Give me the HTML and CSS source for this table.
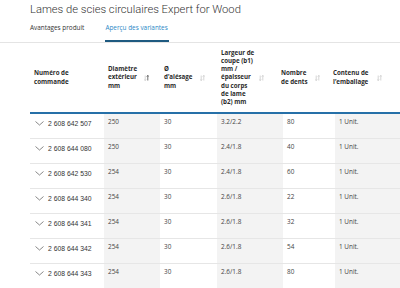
FILE: index.html
```html
<!DOCTYPE html>
<html lang="fr">
<head>
<meta charset="utf-8">
<title>Lames de scies circulaires Expert for Wood</title>
<link rel="stylesheet" href="styles.css">
</head>
<body>
<header class="top">
  <h1 class="title">Lames de scies circulaires Expert for Wood</h1>
  <nav class="tabs">
    <a class="tab">Avantages produit</a>
    <a class="tab active">Aperçu des variantes</a>
  </nav>
</header>
<div class="table">
  <div class="thead">
    <div class="th"><span class="lbl">Numéro de commande</span></div>
    <div class="th"><span class="lbl">Diamètre extérieur mm</span><svg class="sort asc" viewBox="0 0 5 8" width="5" height="8"><path class="dn" d="M1.2 1.5v5M0.2 5.4l1 1.2 1-1.2"/><path class="up" d="M3.8 6.5v-5M2.8 2.6l1-1.2 1 1.2"/></svg></div>
    <div class="th"><span class="lbl">Ø d’alésage mm</span><svg class="sort" viewBox="0 0 5 8" width="5" height="8"><path class="dn" d="M1.2 1.5v5M0.2 5.4l1 1.2 1-1.2"/><path class="up" d="M3.8 6.5v-5M2.8 2.6l1-1.2 1 1.2"/></svg></div>
    <div class="th"><span class="lbl">Largeur de coupe (b1) mm / épaisseur du corps de lame (b2) mm</span><svg class="sort" viewBox="0 0 5 8" width="5" height="8"><path class="dn" d="M1.2 1.5v5M0.2 5.4l1 1.2 1-1.2"/><path class="up" d="M3.8 6.5v-5M2.8 2.6l1-1.2 1 1.2"/></svg></div>
    <div class="th"><span class="lbl">Nombre de dents</span><svg class="sort" viewBox="0 0 5 8" width="5" height="8"><path class="dn" d="M1.2 1.5v5M0.2 5.4l1 1.2 1-1.2"/><path class="up" d="M3.8 6.5v-5M2.8 2.6l1-1.2 1 1.2"/></svg></div>
    <div class="th"><span class="lbl">Contenu de l’emballage</span><svg class="sort" viewBox="0 0 5 8" width="5" height="8"><path class="dn" d="M1.2 1.5v5M0.2 5.4l1 1.2 1-1.2"/><path class="up" d="M3.8 6.5v-5M2.8 2.6l1-1.2 1 1.2"/></svg></div>
  </div>
  <div class="tbody">
    <div class="tr"><div class="td num"><svg class="chev" viewBox="0 0 9 5" width="9" height="5"><path d="M0.5 0.5l4 3.5 4-3.5"/></svg>2 608 642 507</div><div class="td g">250</div><div class="td">30</div><div class="td g">3.2/2.2</div><div class="td">80</div><div class="td g">1 Unit.</div></div>
    <div class="tr"><div class="td num"><svg class="chev" viewBox="0 0 9 5" width="9" height="5"><path d="M0.5 0.5l4 3.5 4-3.5"/></svg>2 608 644 080</div><div class="td g">250</div><div class="td">30</div><div class="td g">2.4/1.8</div><div class="td">40</div><div class="td g">1 Unit.</div></div>
    <div class="tr"><div class="td num"><svg class="chev" viewBox="0 0 9 5" width="9" height="5"><path d="M0.5 0.5l4 3.5 4-3.5"/></svg>2 608 642 530</div><div class="td g">254</div><div class="td">30</div><div class="td g">2.4/1.8</div><div class="td">60</div><div class="td g">1 Unit.</div></div>
    <div class="tr"><div class="td num"><svg class="chev" viewBox="0 0 9 5" width="9" height="5"><path d="M0.5 0.5l4 3.5 4-3.5"/></svg>2 608 644 340</div><div class="td g">254</div><div class="td">30</div><div class="td g">2.6/1.8</div><div class="td">22</div><div class="td g">1 Unit.</div></div>
    <div class="tr"><div class="td num"><svg class="chev" viewBox="0 0 9 5" width="9" height="5"><path d="M0.5 0.5l4 3.5 4-3.5"/></svg>2 608 644 341</div><div class="td g">254</div><div class="td">30</div><div class="td g">2.6/1.8</div><div class="td">32</div><div class="td g">1 Unit.</div></div>
    <div class="tr"><div class="td num"><svg class="chev" viewBox="0 0 9 5" width="9" height="5"><path d="M0.5 0.5l4 3.5 4-3.5"/></svg>2 608 644 342</div><div class="td g">254</div><div class="td">30</div><div class="td g">2.6/1.8</div><div class="td">54</div><div class="td g">1 Unit.</div></div>
    <div class="tr"><div class="td num"><svg class="chev" viewBox="0 0 9 5" width="9" height="5"><path d="M0.5 0.5l4 3.5 4-3.5"/></svg>2 608 644 343</div><div class="td g">254</div><div class="td">30</div><div class="td g">2.6/1.8</div><div class="td">80</div><div class="td g">1 Unit.</div></div>
  </div>
</div>
</body>
</html>
```

FILE: styles.css
```css
html, body {
  margin: 0;
  padding: 0;
  background: #fff;
  overflow: hidden;
}
body {
  width: 400px;
  height: 288px;
  font-family: "Open Sans", "Noto Sans", sans-serif;
  color: #333;
}
.top {
  border-bottom: 1px solid #e4e4e4;
}
.title {
  margin: 0;
  padding: 3px 0 0 30px;
  font-family: Roboto, "Open Sans", sans-serif;
  font-weight: 300;
  font-size: 11.2px;
  line-height: 14px;
  color: #333;
  white-space: nowrap;
}
.tabs {
  display: flex;
  gap: 21px;
  padding-left: 30px;
  margin-top: 1px;
}
.tab {
  font-size: 6.4px;
  line-height: 20px;
  height: 20px;
  padding-bottom: 2px;
  color: #333;
  border-bottom: 2px solid transparent;
}
.tab.active {
  color: #2a88c6;
  border-bottom-color: #1e5a80;
  padding-right: 1px;
}
.table {
  margin-left: 30px;
}
.thead {
  display: grid;
  grid-template-columns: 74px 56px 57px 60px 52px 63px;
  align-items: center;
  height: 69px;
  border-bottom: 2px solid #2670a8;
}
.th {
  display: flex;
  align-items: center;
  padding: 0 4px;
  font-size: 6.2px;
  font-weight: 700;
  line-height: 8.1px;
  color: #2b2b2b;
}
.th .lbl {
  flex: 1;
  padding-right: 4px;
}
.th:nth-child(2) .lbl { max-width: 32px; }
.th:nth-child(3) .lbl { max-width: 32px; }
.th:nth-child(4) .lbl { max-width: 34px; }
.th:nth-child(5) .lbl { max-width: 30px; }
.th:nth-child(6) .lbl { max-width: 40px; }
.sort {
  flex: none;
  margin-right: 2px;
  fill: none;
  stroke-width: 0.7;
}
.sort path { stroke: #c4c4c4; }
.sort.asc .up { stroke: #333; }
.tr {
  display: grid;
  grid-template-columns: 74px 56px 57px 66px 52px 1fr;
  height: 24px;
  border-bottom: 1px solid #e6e6e6;
}
.td {
  padding: 3px 4px 0;
  font-size: 6.4px;
  line-height: 9px;
  color: #444;
}
.td.g { background: #f3f3f3; }
.td.num {
  display: flex;
  align-items: flex-start;
  gap: 4px;
  padding-left: 5px;
  padding-top: 5px;
  font-family: "Liberation Sans", Arial, sans-serif;
  font-size: 6.8px;
  color: #333;
}
.chev {
  margin-top: 2px;
  fill: none;
  stroke: #555;
  stroke-width: 0.7;
}
```
